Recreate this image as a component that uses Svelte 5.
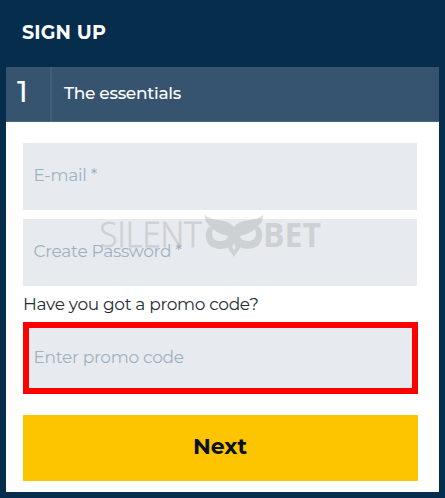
<script lang="ts">
	let email = $state('');
	let password = $state('');
	let promo = $state('');
</script>

<main class="signup">
	<h1>SIGN UP</h1>

	<section class="panel">
		<header>
			<span class="step">1</span>
			<h2>The essentials</h2>
		</header>

		<form>
			<input class="email" type="email" placeholder="E-mail *" bind:value={email} />
			<input class="password" type="password" placeholder="Create Password *" bind:value={password} />
			<label for="promo">Have you got a promo code?</label>
			<input class="promo" id="promo" placeholder="Enter promo code" bind:value={promo} />
			<button type="button">Next</button>
		</form>
	</section>

	<svg class="watermark" viewBox="90 200 244 70" aria-hidden="true">
		<text class="light" x="99.5" y="246.5" textLength="102" lengthAdjust="spacingAndGlyphs">SILENT</text>
		<path
			fill-rule="evenodd"
			d="M204.800 214.800C212 222 227 218 234 227C241 218 256 222 263 214.800C263.500 220 261 224 256.500 227.500L259 226.500C264 232 263 242 257 246.500C251 250 244 249 240 247.500C239 251 236 253 234 257C232 253 229 251 228 247.500C224 249 217 250 211 246.500C205 242 204 232 209 226.500L211.500 227.500C207 224 204.500 220 204.800 214.800ZM213 229C210.500 235 213 240.500 218.500 241C223.500 241.500 227.500 239 228 236.200C223 234.500 217 233 213 229ZM255 229C251 233 245 234.500 240 236.200C240.500 239 244.500 241.500 249.500 241C255 240.500 257.500 235 255 229ZM234 243.500L232.300 247L234 250.500L235.700 247Z"
		/>
		<text class="bold" x="263" y="246.5" textLength="58" lengthAdjust="spacingAndGlyphs">BET</text>
	</svg>
</main>

<style>
	:global(body) {
		margin: 0;
		background: #072d4c;
	}

	.signup {
		box-sizing: border-box;
		position: relative;
		width: 445px;
		height: 498px;
		padding: 0 6px 6px;
		background: #072d4c;
		font-family: Montserrat, Inter, sans-serif;
	}

	h1 {
		margin: 0;
		padding-left: 16px;
		height: 67px;
		line-height: 65px;
		color: #fff;
		font-size: 19px;
		font-weight: 700;
		letter-spacing: 0.2px;
	}

	.panel {
		height: 425px;
		background: #fff;
	}

	header {
		box-sizing: border-box;
		display: flex;
		height: 55px;
		background: #36546f;
		border-bottom: 1px solid #496580;
		color: #fff;
	}

	.step {
		box-sizing: border-box;
		width: 46px;
		padding-left: 11px;
		border-right: 2px solid #426079;
		font-size: 29px;
		font-weight: 500;
		line-height: 49px;
	}

	h2 {
		margin: 0;
		padding-left: 12px;
		font-size: 17px;
		font-weight: 500;
		letter-spacing: -0.3px;
		line-height: 52px;
	}

	form {
		display: flex;
		flex-direction: column;
		padding: 21px 21px 0 17px;
	}

	input {
		box-sizing: border-box;
		width: 394px;
		height: 67px;
		margin: 0 0 9px;
		padding: 0 10.5px 3px;
		border: 0;
		border-radius: 0;
		background: #e7ebf0;
		font: 400 17px Montserrat, Inter, sans-serif;
		letter-spacing: -0.28px;

		&::placeholder {
			color: #9fb1c0;
			opacity: 1;
		}
	}

	.password {
		margin-bottom: 0;
	}

	label {
		height: 36px;
		color: #262c36;
		font-size: 17px;
		letter-spacing: -0.32px;
		line-height: 36px;
	}

	.promo {
		width: 395px;
		height: 72px;
		margin: 0 0 21px;
		padding: 0 4.5px 2px;
		border: 6px solid #f00;
	}

	button {
		width: 395px;
		height: 66px;
		margin-left: -0.5px;
		padding: 0 0 3px;
		border: 0;
		background: #fdc500;
		color: #0a1220;
		font: 700 22px Montserrat, Inter, sans-serif;
	}

	.watermark {
		position: absolute;
		left: 90px;
		top: 200px;
		width: 244px;
		height: 70px;
		fill: #8c8c8c;
		opacity: 0.27;
		pointer-events: none;

		text {
			font-family: 'Open Sans', sans-serif;
			font-size: 34px;
		}

		.light {
			font-weight: 300;
			stroke: #8c8c8c;
			stroke-width: 0.8px;
		}

		.bold {
			font-weight: 700;
		}
	}
</style>
